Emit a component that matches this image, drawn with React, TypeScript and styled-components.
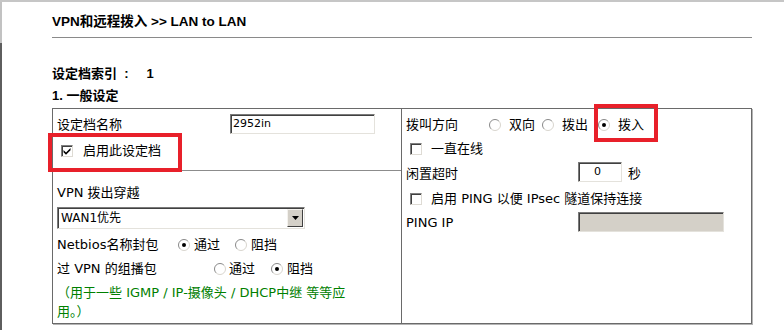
import styled, { createGlobalStyle } from 'styled-components';

const GlobalStyle = createGlobalStyle`
  html, body {
    margin: 0;
    padding: 0;
    height: 100%;
    overflow: hidden;
    background: #fff;
  }
  body {
    font-family: 'DejaVu Sans', 'Noto Sans CJK SC', sans-serif;
    font-size: 13px;
    color: #000;
  }
  #root {
    height: 100%;
  }
`;

const Frame = styled.div`
  position: relative;
  display: flex;
  height: 100%;
  box-sizing: border-box;
  border-top: 2px solid #c6c6c6;
`;

const EdgeStrip = styled.div`
  width: 2px;
  display: flex;
  flex-direction: column;
`;

const EdgePart = styled.div<{ $dark?: boolean }>`
  height: ${({ $dark }) => ($dark ? 'auto' : '41px')};
  flex: ${({ $dark }) => ($dark ? 1 : 'none')};
  background: ${({ $dark }) => ($dark ? '#5e5e5e' : '#c2c2c2')};
`;

const Main = styled.div`
  padding-left: 50px;
  width: 700px;
`;

const PageTitle = styled.h1`
  margin: 0;
  height: 35px;
  display: flex;
  align-items: center;
  font-family: 'Liberation Sans', 'Noto Sans CJK SC', sans-serif;
  font-size: 13.5px;
  font-weight: bold;
  border-bottom: 1px solid #8a8a8a;
`;

const IndexLine = styled.div`
  margin-top: 22px;
  height: 24px;
  display: flex;
  align-items: center;
  font-family: 'Liberation Sans', 'Noto Sans CJK SC', sans-serif;
  font-size: 13px;
  font-weight: bold;
  white-space: pre;
`;

const SectionTitle = styled(IndexLine)`
  margin-top: 0;
  height: 20px;
  margin-bottom: 4px;
`;

const Table = styled.div`
  display: grid;
  grid-template-columns: 349px 1fr;
  height: 216px;
  box-sizing: border-box;
  border: 1px solid #6a6a6a;
  box-shadow: 1px 1px 0 #b4b4b4;
`;

const LeftCol = styled.div`
  display: flex;
  flex-direction: column;
  border-right: 1px solid #6a6a6a;
`;

const CellSection = styled.div<{ $top?: boolean }>`
  padding: ${({ $top }) => ($top ? '4px 4px 6px' : '8px 4px 0')};
  border-bottom: ${({ $top }) => ($top ? '1px solid #8c8c8c' : 'none')};
`;

const RightCol = styled.div`
  padding: 4px 4px 0;
`;

const Row = styled.div<{ $h: number }>`
  display: flex;
  align-items: center;
  height: ${({ $h }) => $h}px;
  line-height: ${({ $h }) => $h}px;
  white-space: nowrap;
`;

const Label = styled.span<{ $w?: number }>`
  display: inline-block;
  width: ${({ $w }) => ($w ? `${$w}px` : 'auto')};
  flex: none;
`;

const TextBox = styled.div<{ $w: number; $disabled?: boolean; $pad?: number }>`
  align-self: flex-start;
  margin-top: 1px;
  width: ${({ $w }) => $w}px;
  height: 20px;
  box-sizing: border-box;
  border-style: solid;
  border-width: 1px;
  border-color: #7a7a7a #e4e2dc #e4e2dc #7a7a7a;
  box-shadow: inset 1px 1px 0 #404040;
  background: ${({ $disabled }) => ($disabled ? '#d4d0c8' : '#fff')};
  padding-left: ${({ $pad }) => $pad ?? 2}px;
  font-size: 11px;
  line-height: 18px;
`;

const Unit = styled.span`
  margin-left: 6px;
`;

const BoxMark = styled.span<{ $left: number; $gap: number }>`
  display: inline-flex;
  align-items: center;
  justify-content: center;
  width: 12px;
  height: 12px;
  box-sizing: border-box;
  margin-left: ${({ $left }) => $left}px;
  margin-right: ${({ $gap }) => $gap}px;
  border-style: solid;
  border-width: 1px;
  border-color: #808080 #dedbd4 #dedbd4 #808080;
  box-shadow: inset 1px 1px 0 #404040;
  background: #fff;
  flex: none;
`;

const Check = ({ checked, left, gap }: { checked?: boolean; left: number; gap: number }) => (
  <BoxMark $left={left} $gap={gap}>
    {checked && (
      <svg width="8" height="8" viewBox="0 0 8 8">
        <path d="M0.5 3 L3 5.5 L7.5 1 L7.5 3.2 L3 7.7 L0.5 5.2 Z" fill="#000" />
      </svg>
    )}
  </BoxMark>
);

const OptionWrap = styled.span<{ $w: number; $gap: number }>`
  display: inline-flex;
  align-items: center;
  width: ${({ $w }) => $w}px;
  flex: none;

  svg {
    margin-right: ${({ $gap }) => $gap}px;
    flex: none;
  }
`;

const Radio = ({ checked, label, w, gap }: { checked?: boolean; label: string; w: number; gap: number }) => (
  <OptionWrap $w={w} $gap={gap}>
    <svg width="12" height="12" viewBox="0 0 12 12">
      <circle cx="6" cy="6" r="5" fill="#fff" />
      <path d="M2.1 9.9 A5.5 5.5 0 0 1 9.9 2.1" fill="none" stroke="#8a8a8a" strokeWidth="1" />
      <path d="M9.9 2.1 A5.5 5.5 0 0 1 2.1 9.9" fill="none" stroke="#d8d5ce" strokeWidth="1" />
      {checked && <circle cx="6" cy="6" r="2" fill="#000" />}
    </svg>
    {label}
  </OptionWrap>
);

const SelectBox = styled.div`
  margin-top: 1px;
  align-self: flex-start;
  width: 248px;
  height: 22px;
  box-sizing: border-box;
  display: flex;
  align-items: stretch;
  border-style: solid;
  border-width: 1px;
  border-color: #7a7a7a #e4e2dc #e4e2dc #7a7a7a;
  box-shadow: inset 1px 1px 0 #404040;
  background: #fff;
  font-size: 12px;
`;

const SelectText = styled.span`
  flex: 1;
  padding-left: 3px;
  line-height: 20px;
`;

const DropButton = styled.span`
  width: 16px;
  margin: 1px 1px 1px 0;
  box-sizing: border-box;
  background: #d4d0c8;
  border-style: solid;
  border-width: 1px;
  border-color: #f4f2ee #404040 #404040 #f4f2ee;
  display: flex;
  align-items: center;
  justify-content: center;
`;

const Note = styled.div`
  margin-top: 2px;
  width: 330px;
  color: #008000;
  line-height: 19px;
`;

const Highlight = styled.div<{ $x: number; $y: number; $w: number; $h: number }>`
  position: absolute;
  left: ${({ $x }) => $x}px;
  top: ${({ $y }) => $y - 2}px;
  width: ${({ $w }) => $w}px;
  height: ${({ $h }) => $h}px;
  box-sizing: border-box;
  border: 4px solid #e8202a;
  pointer-events: none;
`;

export default function App() {
  return (
    <>
      <GlobalStyle />
      <Frame>
        <EdgeStrip>
          <EdgePart />
          <EdgePart $dark />
        </EdgeStrip>
        <Main>
          <PageTitle>VPN和远程拨入 &gt;&gt; LAN to LAN</PageTitle>
          <IndexLine>{'设定档索引  :     1'}</IndexLine>
          <SectionTitle>1. 一般设定</SectionTitle>
          <Table>
            <LeftCol>
              <CellSection $top>
                <Row $h={24}>
                  <Label $w={173}>设定档名称</Label>
                  <TextBox $w={145}>2952in</TextBox>
                </Row>
                <Row $h={27}>
                  <Check checked left={4} gap={10} />
                  启用此设定档
                </Row>
              </CellSection>
              <CellSection>
                <Row $h={27}>VPN 拨出穿越</Row>
                <Row $h={27}>
                  <SelectBox>
                    <SelectText>WAN1优先</SelectText>
                    <DropButton>
                      <svg width="7" height="4" viewBox="0 0 7 4">
                        <path d="M0 0 H7 L3.5 4 Z" fill="#000" />
                      </svg>
                    </DropButton>
                  </SelectBox>
                </Row>
                <Row $h={24}>
                  <Label $w={121}>Netbios名称封包</Label>
                  <Radio checked label="通过" w={57} gap={4} />
                  <Radio label="阻挡" w={50} gap={4} />
                </Row>
                <Row $h={24}>
                  <Label $w={157}>过 VPN 的组播包</Label>
                  <Radio label="通过" w={57} gap={3} />
                  <Radio checked label="阻挡" w={50} gap={4} />
                </Row>
                <Note>
                  （用于一些 IGMP / IP-摄像头 / DHCP中继 等等应
                  <br />
                  用。）
                </Note>
              </CellSection>
            </LeftCol>
            <RightCol>
              <Row $h={24}>
                <Label $w={83}>拨叫方向</Label>
                <Radio label="双向" w={53} gap={8} />
                <Radio label="拨出" w={56} gap={8} />
                <Radio checked label="拨入" w={50} gap={8} />
              </Row>
              <Row $h={24}>
                <Check left={4} gap={9} />
                一直在线
              </Row>
              <Row $h={26}>
                <Label $w={172}>闲置超时</Label>
                <TextBox $w={44} $pad={15}>0</TextBox>
                <Unit>秒</Unit>
              </Row>
              <Row $h={24}>
                <Check left={4} gap={9} />
                启用 PING 以便 IPsec 隧道保持连接
              </Row>
              <Row $h={24}>
                <Label $w={172}>PING IP</Label>
                <TextBox $w={146} $disabled />
              </Row>
            </RightCol>
          </Table>
        </Main>
        <Highlight $x={48} $y={133} $w={134} $h={39} />
        <Highlight $x={594} $y={104} $w={64} $h={38} />
      </Frame>
    </>
  );
}
